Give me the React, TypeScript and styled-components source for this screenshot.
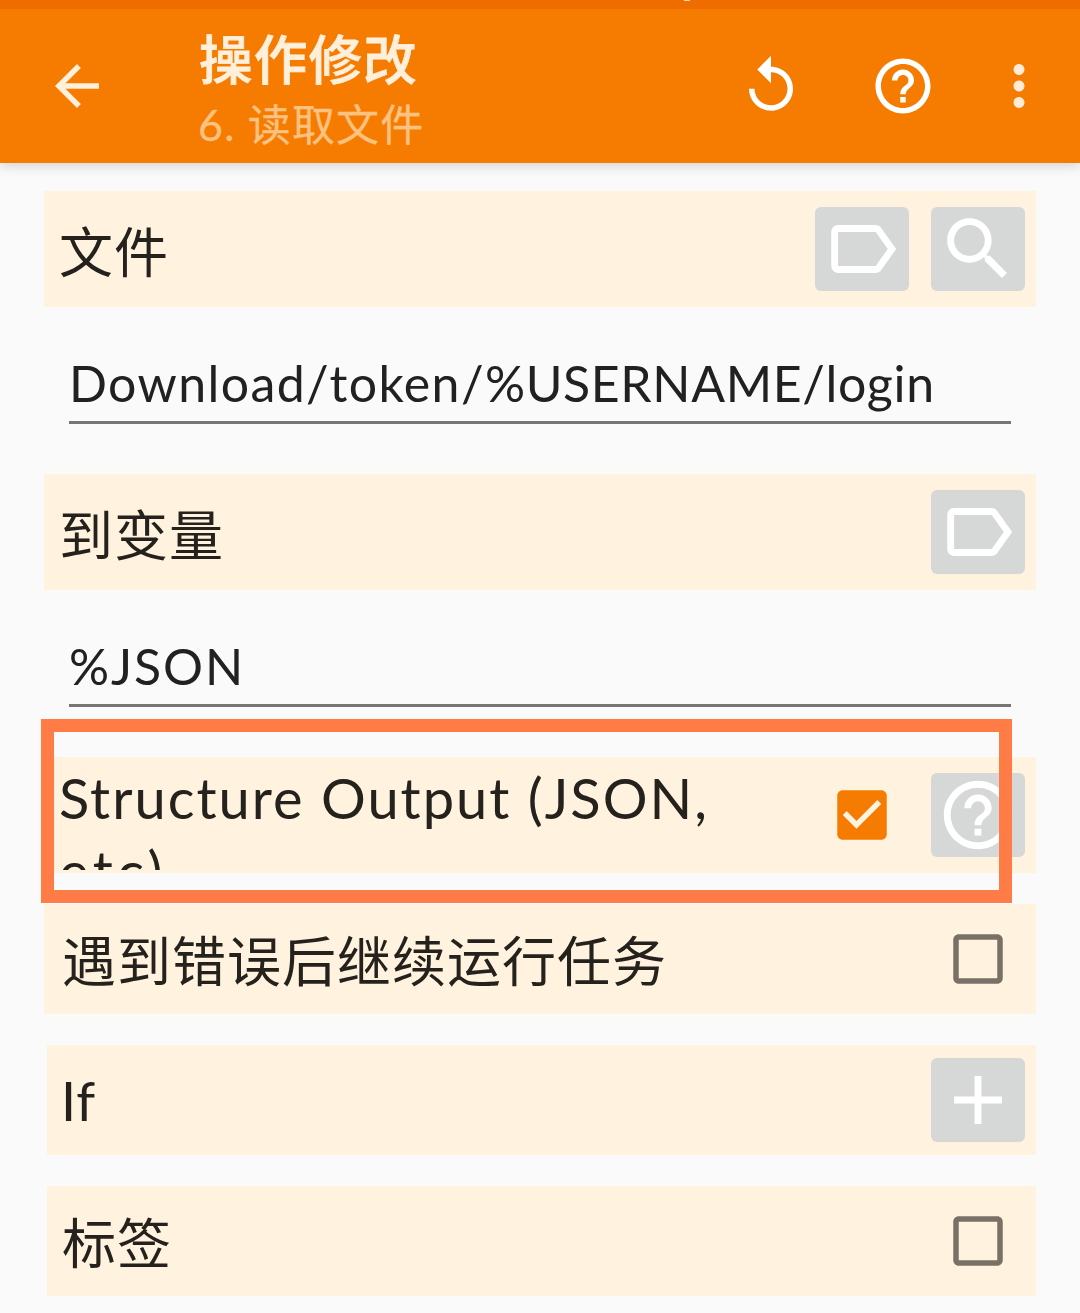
import React from "react";
import styled, { createGlobalStyle } from "styled-components";

const GlobalStyle = createGlobalStyle`
  * { box-sizing: border-box; }
  body {
    margin: 0;
    background: #fafafa;
    font-family: Lato, "Noto Sans CJK SC", sans-serif;
    color: #212121;
  }
`;

const Screen = styled.div`
  width: 1080px;
  height: 1313px;
  overflow: hidden;
  display: flex;
  flex-direction: column;
  background: #fafafa;
`;

const StatusBar = styled.div`
  position: relative;
  z-index: 1;
  height: 9px;
  flex: none;
  background: #ef6c00;
  display: flex;
  padding-left: 684px;
`;

const StatusMark = styled.div`
  width: 6px;
  height: 1px;
  background: #fbd3b0;
`;

const Toolbar = styled.header`
  height: 154px;
  flex: none;
  background: #f57c00;
  box-shadow: 0 2px 12px rgba(0, 0, 0, 0.18);
  display: flex;
  align-items: center;
  padding: 0 28px 0 44px;
`;

const Titles = styled.div`
  flex: 1;
  margin-left: 89px;
  padding-top: 4px;
  display: flex;
  flex-direction: column;
`;

const Title = styled.div`
  font-size: 53.5px;
  line-height: 72px;
  font-weight: 500;
  letter-spacing: 1.2px;
  color: #ffefdb;
  -webkit-text-stroke: 0.8px #ffefdb;
`;

const Subtitle = styled.div`
  margin-left: -1px;
  font-size: 43px;
  line-height: 59px;
  letter-spacing: 1.2px;
  color: #fdc180;
  -webkit-text-stroke: 0.3px #fdc180;
`;

const Actions = styled.div`
  display: flex;
  align-items: center;
  gap: 66px;
`;

const OverflowSlot = styled.div`
  width: 66px;
  margin-left: -16px;
  display: flex;
`;

const Form = styled.main`
  display: flex;
  flex-direction: column;
  padding: 28px 44px 0;
`;

const Row = styled.section<{ $height?: number; $gap?: number; $inset?: number }>`
  height: ${(p) => p.$height ?? 110}px;
  margin-top: ${(p) => p.$gap ?? 0}px;
  margin-left: ${(p) => p.$inset ?? 0}px;
  padding: 0 11px 0 ${(p) => 15 - (p.$inset ?? 0)}px;
  flex: none;
  background: #fff2df;
  display: flex;
  align-items: center;
`;

const Label = styled.div<{ $indent?: number; $drop?: number }>`
  flex: 1;
  padding-left: ${(p) => p.$indent ?? 0}px;
  padding-top: ${(p) => p.$drop ?? 0}px;
  font-size: 54px;
  line-height: 73px;
  letter-spacing: 1px;
  color: #25211c;
`;

const ClippedLabel = styled(Label)`
  height: 110px;
  overflow: hidden;
  font-size: 56px;
  letter-spacing: 2px;
  white-space: nowrap;
`;

const Spaced = styled.span<{ $by: number }>`
  letter-spacing: ${(p) => p.$by}px;
`;

const Buttons = styled.div`
  display: flex;
  align-items: center;
  gap: 22px;
`;

const GrayButton = styled.button`
  width: 94px;
  height: 84px;
  border: 0;
  border-radius: 6px;
  padding: 0;
  background: #d6d8d7;
  display: flex;
  align-items: center;
  justify-content: center;
`;

const CheckSlot = styled.div`
  width: 94px;
  display: flex;
  justify-content: center;
`;

const Field = styled.div`
  height: 117px;
  margin: 0 25px 50px;
  flex: none;
  border-bottom: 3px solid #767676;
  padding-top: 42px;
  font-size: 50px;
  line-height: 68px;
  white-space: nowrap;
`;

const Highlight = styled.div`
  position: absolute;
  left: -3px;
  top: -38px;
  width: 971px;
  height: 184px;
  border: 13px solid #ff7c47;
`;

const HighlightAnchor = styled.div`
  position: relative;
`;

function Icon({ d, size, color = "#fff" }: { d: string; size: number; color?: string }) {
  return (
    <svg width={size} height={size} viewBox="0 0 24 24" fill={color}>
      <path d={d} />
    </svg>
  );
}

const BACK = "M20 11H7.83l5.59-5.59L12 4l-8 8 8 8 1.41-1.41L7.83 13H20v-2z";
const REPLAY =
  "M12 5V1L7 6l5 5V7c3.31 0 6 2.69 6 6s-2.69 6-6 6-6-2.69-6-6H4c0 4.42 3.58 8 8 8s8-3.58 8-8-3.58-8-8-8z";
const HELP =
  "M11 18h2v-2h-2v2zm1-16C6.48 2 2 6.48 2 12s4.48 10 10 10 10-4.48 10-10S17.52 2 12 2zm0 18c-4.41 0-8-3.59-8-8s3.59-8 8-8 8 3.59 8 8-3.59 8-8 8zm0-14c-2.21 0-4 1.79-4 4h2c0-1.1.9-2 2-2s2 .9 2 2c0 2-3 1.75-3 5h2c0-2.25 3-2.5 3-5 0-2.21-1.79-4-4-4z";
const MORE =
  "M12 8c1.1 0 2-.9 2-2s-.9-2-2-2-2 .9-2 2 .9 2 2 2zm0 2c-1.1 0-2 .9-2 2s.9 2 2 2 2-.9 2-2-.9-2-2-2zm0 6c-1.1 0-2 .9-2 2s.9 2 2 2 2-.9 2-2-.9-2-2-2z";
const TAG =
  "M17.63 5.84C17.27 5.33 16.67 5 16 5L5 5.01C3.9 5.01 3 5.9 3 7v10c0 1.1.9 1.99 2 1.99L16 19c.67 0 1.27-.33 1.63-.84L22 12l-4.37-6.16zM16 17H5V7h11l3.55 5L16 17z";
const SEARCH =
  "M15.5 14h-.79l-.28-.27C15.41 12.59 16 11.11 16 9.5 16 5.91 13.09 3 9.5 3S3 5.91 3 9.5 5.91 16 9.5 16c1.61 0 3.09-.59 4.23-1.57l.27.28v.79l5 4.99L20.49 19l-4.99-5zm-6 0C7.01 14 5 11.99 5 9.5S7.01 5 9.5 5 14 7.01 14 9.5 11.99 14 9.5 14z";
const PLUS = "M19 13h-6v6h-2v-6H5v-2h6V5h2v6h6v2z";
const BOX =
  "M19 5v14H5V5h14m0-2H5c-1.1 0-2 .9-2 2v14c0 1.1.9 2 2 2h14c1.1 0 2-.9 2-2V5c0-1.1-.9-2-2-2z";
const BOX_FILL =
  "M19 3H5c-1.11 0-2 .9-2 2v14c0 1.1.89 2 2 2h14c1.11 0 2-.9 2-2V5c0-1.1-.89-2-2-2z";
const TICK = "M10 17l-5-5 1.41-1.41L10 14.17l7.59-7.59L19 8l-9 9z";

const IconButton = ({ d }: { d: string }) => (
  <GrayButton>
    <Icon d={d} size={82} />
  </GrayButton>
);

const Check = ({ on }: { on?: boolean }) => (
  <CheckSlot>
    {on ? (
      <svg width={66} height={66} viewBox="0 0 24 24">
        <path d={BOX_FILL} fill="#f57c00" />
        <path d={TICK} fill="#fff2df" />
      </svg>
    ) : (
      <Icon d={BOX} size={66} color="#797066" />
    )}
  </CheckSlot>
);

export default function App() {
  return (
    <Screen>
      <GlobalStyle />
      <StatusBar>
        <StatusMark />
      </StatusBar>
      <Toolbar>
        <Icon d={BACK} size={66} color="#ffefdb" />
        <Titles>
          <Title>操作修改</Title>
          <Subtitle>6. 读取文件</Subtitle>
        </Titles>
        <Actions>
          <Icon d={REPLAY} size={66} />
          <Icon d={HELP} size={66} />
          <OverflowSlot>
            <Icon d={MORE} size={66} color="#ffebd6" />
          </OverflowSlot>
        </Actions>
      </Toolbar>
      <Form>
        <Row $height={116}>
          <Label $drop={6}>文件</Label>
          <Buttons>
            <IconButton d={TAG} />
            <IconButton d={SEARCH} />
          </Buttons>
        </Row>
        <Field>
          <Spaced $by={1.4}>Download/token/</Spaced>
          <Spaced $by={0.65}>%USERNAME/login</Spaced>
        </Field>
        <Row $height={116}>
          <Label $drop={6}>到变量</Label>
          <IconButton d={TAG} />
        </Row>
        <Field>
          <Spaced $by={1.9}>%JSON</Spaced>
        </Field>
        <HighlightAnchor>
          <Row $height={116}>
            <ClippedLabel $drop={1}>
              Structure Output (JSON,
              <br />
              <Spaced $by={4.5}>etc)</Spaced>
            </ClippedLabel>
            <Buttons>
              <Check on />
              <IconButton d={HELP} />
            </Buttons>
          </Row>
          <Highlight />
        </HighlightAnchor>
        <Row $gap={31}>
          <Label $indent={3} $drop={5}>遇到错误后继续运行任务</Label>
          <Check />
        </Row>
        <Row $gap={31} $inset={3}>
          <Label $indent={2}>If</Label>
          <IconButton d={PLUS} />
        </Row>
        <Row $gap={31} $inset={3}>
          <Label $indent={3} $drop={5}>标签</Label>
          <Check />
        </Row>
      </Form>
    </Screen>
  );
}
